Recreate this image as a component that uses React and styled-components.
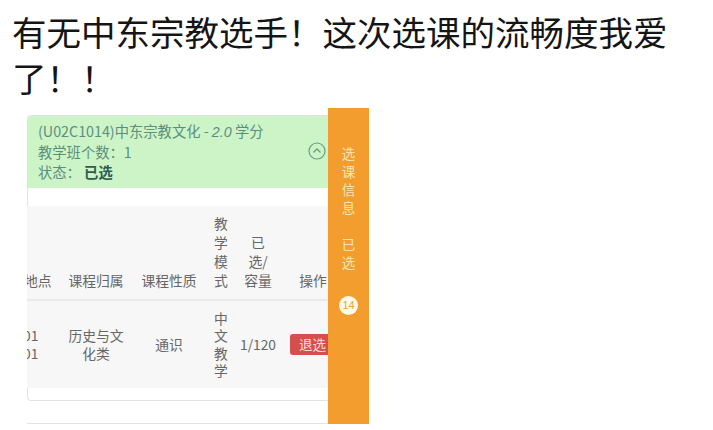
import React from 'react';
import styled, { createGlobalStyle } from 'styled-components';

const GlobalStyle = createGlobalStyle`
  body {
    margin: 0;
    background: #fff;
    font-family: "Noto Sans CJK SC", "Noto Sans", sans-serif;
  }
`;

const Page = styled.div`
  width: 713px;
  height: 430px;
  overflow: hidden;
`;

const Title = styled.p`
  margin: 0;
  padding: 8px 0 0 12px;
  width: 690px;
  font-size: 34.5px;
  line-height: 46px;
  color: #151515;
`;

const Shot = styled.div`
  display: flex;
  width: 342px;
  height: 316px;
  margin: 8px 0 0 27px;
  background: #fff;
`;

const Viewport = styled.div`
  flex: 1;
  overflow: hidden;
  padding-top: 7px;
`;

const Card = styled.div`
  border: 1px solid #dfe3e3;
  border-right: none;
  border-radius: 4px 0 0 4px;
  background: #fff;
  padding-bottom: 12px;
`;

const CourseHead = styled.div`
  position: relative;
  height: 72px;
  box-sizing: border-box;
  padding: 5px 10px;
  background: #cdf4c6;
  border-radius: 4px 0 0 0;
  color: #5a8f7f;
  font-size: 14.3px;
  line-height: 20px;

  em {
    font-family: "Liberation Sans", sans-serif;
  }

  b {
    color: #2f5c52;
  }
`;

const Toggle = styled.svg`
  position: absolute;
  right: 2px;
  top: 26px;
`;

const Gap = styled.div`
  height: 18px;
`;

const Table = styled.table`
  margin-left: -14px;
  width: 330px;
  border-collapse: collapse;
  table-layout: fixed;
  background: #f7f7f7;
  font-size: 13.8px;
  color: #666;
`;

const Th = styled.th`
  font-weight: normal;
  vertical-align: bottom;
  text-align: ${p => p.align || 'center'};
  padding: 6px ${p => p.pad}px 9px;
  line-height: 19px;
  height: 94px;
  box-sizing: border-box;
  border-bottom: 2px solid #eaeaea;
`;

const Td = styled.td`
  vertical-align: middle;
  text-align: ${p => p.align || 'center'};
  padding: 0 ${p => p.pad}px;
  line-height: 17.5px;
  height: 87px;
`;

const Quit = styled.span`
  display: inline-block;
  padding: 0 9px;
  line-height: 21px;
  border-radius: 3px;
  background: #d5504d;
  color: #f9dcdb;
  font-size: 13.5px;
  white-space: nowrap;
`;

const NextCard = styled.div`
  margin-top: 22px;
  height: 10px;
  border-top: 1px solid #dfe3e3;
  background: #fafafa;
`;

const Side = styled.div`
  width: 41px;
  padding-top: 36px;
  box-sizing: border-box;
  background: #f29d2e;
  display: flex;
  flex-direction: column;
  align-items: center;
  color: #fde6b4;
  font-size: 13.5px;
  line-height: 18px;
`;

const SideText = styled.div`
  width: 14px;
  text-align: center;
  margin-bottom: ${p => p.mb || 0}px;
`;

const Count = styled.span`
  width: 19px;
  height: 19px;
  border-radius: 50%;
  background: #fffbea;
  color: #f0a040;
  font-family: "Liberation Sans", sans-serif;
  font-size: 11px;
  line-height: 19px;
  text-align: center;
`;

const cols = [48, 68, 78, 26, 48, 62];

export default function App() {
  return (
    <Page>
      <GlobalStyle />
      <Title>有无中东宗教选手！这次选课的流畅度我爱了！！</Title>
      <Shot>
        <Viewport>
          <Card>
            <CourseHead>
              <div>(U02C1014)中东宗教文化 - <em>2.0</em> 学分</div>
              <div>教学班个数：1</div>
              <div>状态： <b>已选</b></div>
              <Toggle width="18" height="18" viewBox="0 0 18 18">
                <circle cx="9" cy="9" r="8" fill="none" stroke="#6b9a88" strokeWidth="1.2" />
                <path d="M5.5 10.5 L9 7 L12.5 10.5" fill="none" stroke="#6b9a88" strokeWidth="1.3" />
              </Toggle>
            </CourseHead>
            <Gap />
            <Table>
              <colgroup>
                {cols.map((w, i) => <col key={i} style={{ width: w }} />)}
              </colgroup>
              <thead>
                <tr>
                  <Th align="left" pad={10}>地点</Th>
                  <Th pad={5}>课程归属</Th>
                  <Th pad={6}>课程性质</Th>
                  <Th pad={5}>教学模式</Th>
                  <Th pad={9}>已选/容量</Th>
                  <Th pad={8}>操作</Th>
                </tr>
              </thead>
              <tbody>
                <tr>
                  <Td align="left" pad={9}>01<br />01</Td>
                  <Td pad={5}>历史与文化类</Td>
                  <Td pad={6}>通识</Td>
                  <Td pad={5}>中文教学</Td>
                  <Td pad={2}>1/120</Td>
                  <Td align="left" pad={8}><Quit>退选</Quit></Td>
                </tr>
              </tbody>
            </Table>
          </Card>
          <NextCard />
        </Viewport>
        <Side>
          <SideText mb={19}>选课信息</SideText>
          <SideText mb={25}>已选</SideText>
          <Count>14</Count>
        </Side>
      </Shot>
    </Page>
  );
}
